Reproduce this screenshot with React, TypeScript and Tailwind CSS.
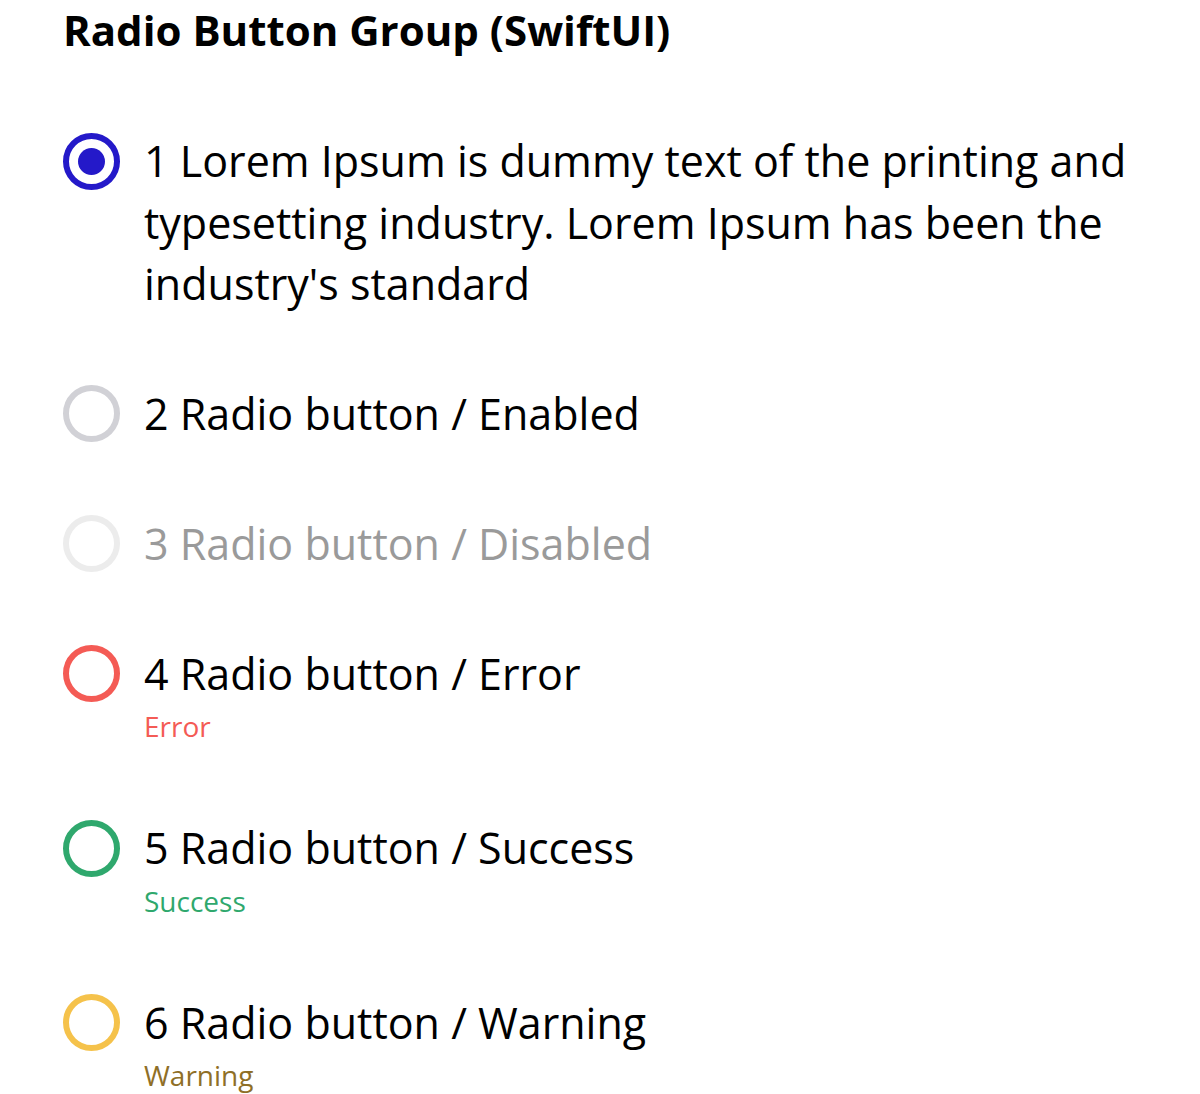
const items = [
  {
    label:
      "1 Lorem Ipsum is dummy text of the printing and typesetting industry. Lorem Ipsum has been the industry's standard",
    ring: "border-[#2419c9]",
    text: "text-black",
    selected: true,
  },
  { label: "2 Radio button / Enabled", ring: "border-[#d1d1d6]", text: "text-black" },
  { label: "3 Radio button / Disabled", ring: "border-[#ececec]", text: "text-[#9a9a9a]" },
  {
    label: "4 Radio button / Error",
    ring: "border-[#f45b55]",
    text: "text-black",
    note: "Error",
    noteColor: "text-[#f45b55]",
  },
  {
    label: "5 Radio button / Success",
    ring: "border-[#2fa86d]",
    text: "text-black",
    note: "Success",
    noteColor: "text-[#2fa86d]",
  },
  {
    label: "6 Radio button / Warning",
    ring: "border-[#f5c24b]",
    text: "text-black",
    note: "Warning",
    noteColor: "text-[#8f6f27]",
  },
];

export default function App() {
  return (
    <div className="min-h-screen bg-white pl-[63px] pr-[40px] font-['Open_Sans',sans-serif]">
      <h1 className="pt-[5px] text-[42px] font-bold leading-[50px] text-black">
        Radio Button Group (SwiftUI)
      </h1>

      <div className="mt-[75px] flex flex-col gap-[68px]">
        {items.map((item) => (
          <div key={item.label} className="flex items-start gap-[24px]">
            <div className="flex h-[62px] items-center">
              <div
                className={`flex h-[57px] w-[57px] shrink-0 items-center justify-center rounded-full border-[6px] ${item.ring}`}
              >
                {item.selected && <div className="h-[27px] w-[27px] rounded-full bg-[#2419c9]" />}
              </div>
            </div>
            <div className="flex flex-col">
              <p className={`text-[43px] leading-[61.5px] ${item.text}`}>{item.label}</p>
              {item.note && (
                <p className={`text-[28px] leading-[45px] ${item.noteColor}`}>{item.note}</p>
              )}
            </div>
          </div>
        ))}
      </div>
    </div>
  );
}
